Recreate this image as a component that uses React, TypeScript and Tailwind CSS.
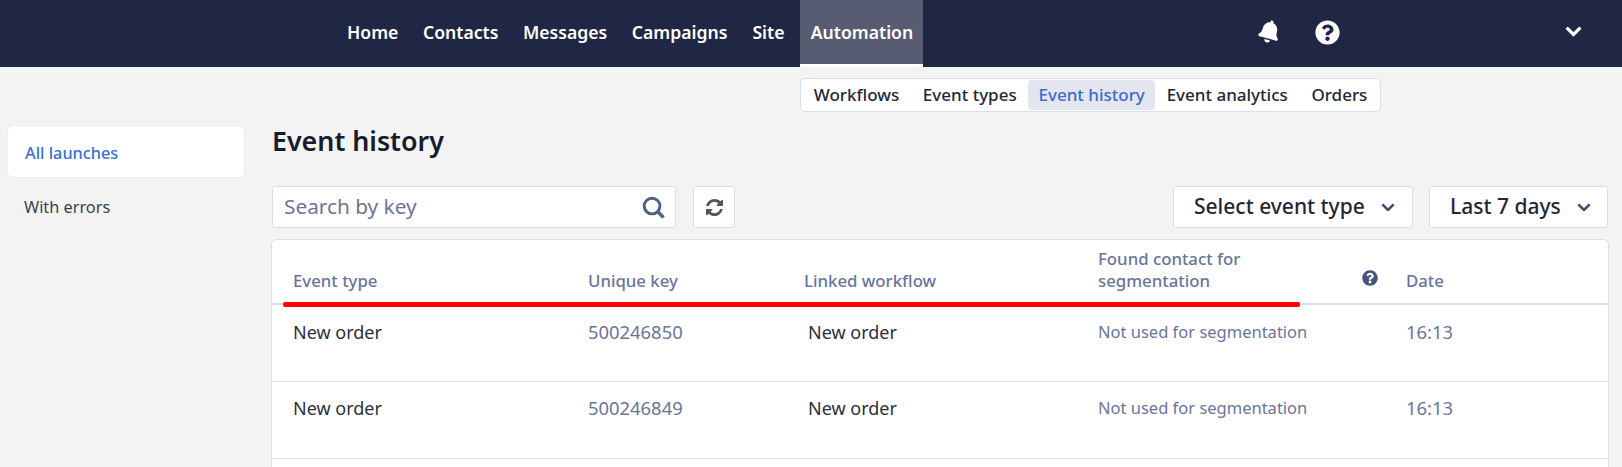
import { FaBell, FaQuestionCircle } from "react-icons/fa";

const topNav = [
  { label: "Home", cls: "ml-[347px]" },
  { label: "Contacts", cls: "ml-[24.6px]" },
  { label: "Messages", cls: "ml-[24.6px]" },
  { label: "Campaigns", cls: "ml-[24.6px]" },
  { label: "Site", cls: "ml-[25px]" },
];

const subNav = ["Workflows", "Event types", "Event history", "Event analytics", "Orders"];

const rows = [
  { key: "500246850", time: "16:13", pad: "pt-[15px]" },
  { key: "500246849", time: "16:13", pad: "pt-[14px]" },
];

const Chevron = ({ className }: { className: string }) => (
  <svg viewBox="0 0 16 10" fill="none" stroke="currentColor" strokeWidth="3" className={className}>
    <path d="M1.5 1.5 8 8l6.5-6.5" />
  </svg>
);

const App = () => {
  return (
    <div className="relative h-screen overflow-hidden bg-[#f3f3f3] font-['Noto_Sans',sans-serif] text-[#1f2739]">
      {/* Top bar */}
      <header className="flex h-[67px] items-center bg-[#1f2744] text-white">
        {topNav.map((item) => (
          <a key={item.label} className={`pb-[2px] text-[17.6px] font-semibold ${item.cls}`}>
            {item.label}
          </a>
        ))}
        <a className="ml-[16px] flex h-[67px] w-[123px] items-center justify-center border-b-[3px] border-white bg-[#585c72] text-[17.6px] font-semibold">
          Automation
        </a>
        <FaBell className="mb-[4px] ml-[335px] rotate-[15deg] text-[23px]" />
        <FaQuestionCircle className="mb-[2px] ml-[34px] text-[25px]" />
        <Chevron className="mb-[4px] ml-[225px] w-[17px]" />
      </header>

      {/* Sub navigation */}
      <div className="ml-[800px] mt-[11px] flex h-[34px] w-[581px] items-center whitespace-nowrap rounded-[5px] border border-[#d9deea] bg-white px-[1px] text-[17px] font-medium">
        {subNav.map((item) =>
          item === "Event history" ? (
            <span key={item} className="flex h-[30px] items-center rounded-[4px] bg-[#e3e6ee] px-[10px] text-[#3b6cc9]">
              {item}
            </span>
          ) : (
            <span key={item} className="px-[11.8px]">
              {item}
            </span>
          ),
        )}
      </div>

      <div className="flex">
        {/* Sidebar */}
        <aside className="ml-[7px] mt-[13px] w-[238px] text-[16.3px]">
          <div className="flex h-[53px] items-center rounded-[6px] border border-[#eeeeee] bg-white pl-[17px] pt-[3px] font-medium text-[#3b6fd4]">
            All launches
          </div>
          <div className="mt-[17px] pl-[17px] text-[#3a3f4d]">With errors</div>
        </aside>

        {/* Main */}
        <main className="ml-[27px] w-[1338px]">
          <h1 className="mt-[11px] text-[26.8px] font-semibold leading-[36px] text-[#171c2c]">Event history</h1>

          <div className="mt-[27px] flex items-center">
            <div className="flex h-[42px] w-[404px] items-center justify-between rounded-[3px] border border-[#d9deea] bg-white pl-[11px] pr-[10px] text-[20.8px] text-[#6b7596]">
              <span>Search by key</span>
              <svg viewBox="0 0 24 24" fill="none" stroke="#4f6185" strokeWidth="3" className="w-[23px]">
                <circle cx="10.5" cy="10.5" r="8.2" />
                <path d="m16.5 16.5 6 6" strokeWidth="3.6" />
              </svg>
            </div>
            <div className="ml-[17px] flex h-[42px] w-[42px] items-center justify-center rounded-[3px] border border-[#d9deea] bg-white">
              <svg viewBox="0 0 1536 1536" fill="#555555" className="w-[17px]">
                <path d="M1511 928q0 5-1 7-64 268-268 434.5t-478 166.5q-146 0-282.5-55t-243.5-157l-129 129q-19 19-45 19t-45-19-19-45v-448q0-26 19-45t45-19h448q26 0 45 19t19 45-19 45l-137 137q71 66 161 102t187 36q134 0 250-65t186-179q11-17 53-117 8-23 30-23h192q13 0 22.5 9.5t9.5 22.5zm25-800v448q0 26-19 45t-45 19h-448q-26 0-45-19t-19-45 19-45l138-138q-148-137-349-137-134 0-250 65t-186 179q-11 17-53 117-8 23-30 23h-199q-13 0-22.5-9.5t-9.5-22.5v-7q65-268 270-434.5t480-166.5q146 0 284 55.5t245 156.5l130-129q19-19 45-19t45 19 19 45z" />
              </svg>
            </div>
            <div className="ml-[438px] flex h-[42px] w-[240px] items-center rounded-[3px] border border-[#d9deea] bg-white pl-[20px] text-[21px] font-medium">
              Select event type
              <Chevron className="ml-[16px] w-[14px] text-[#3f4f78]" />
            </div>
            <div className="ml-[16px] flex h-[42px] w-[179px] items-center rounded-[3px] border border-[#d9deea] bg-white pl-[20px] text-[21px] font-medium">
              Last 7 days
              <Chevron className="ml-[16px] w-[14px] text-[#3f4f78]" />
            </div>
          </div>

          {/* Table */}
          <div className="-ml-[1px] mt-[11px] h-[300px] w-[1338px] rounded-[6px] border border-[#d9deea] bg-white">
            <div className="flex h-[65px] items-end border-b-2 border-[#d9deea] pb-[11px] text-[16.8px] font-medium leading-[22px] text-[#69759a]">
              <span className="ml-[21px] w-[295px]">Event type</span>
              <span className="w-[216px]">Unique key</span>
              <span className="w-[294px]">Linked workflow</span>
              <span className="w-[264px]">
                Found contact for
                <br />
                segmentation
              </span>
              <span className="mb-[6px] w-[44px]">
                <FaQuestionCircle className="text-[16px] text-[#47557e]" />
              </span>
              <span>Date</span>
            </div>
            {rows.map((row) => (
              <div key={row.key} className={`flex h-[77px] border-b border-[#d9deea] text-[18px] leading-[24px] ${row.pad}`}>
                <span className="ml-[21px] w-[295px] text-[#2b3040]">New order</span>
                <span className="w-[220px] text-[18.4px] text-[#69759a]">{row.key}</span>
                <span className="w-[290px] text-[#2b3040]">New order</span>
                <span className="w-[308px] text-[16.5px] text-[#69759a]">Not used for segmentation</span>
                <span className="text-[18.4px] text-[#69759a]">{row.time}</span>
              </div>
            ))}
          </div>
        </main>
      </div>

      {/* Red annotation */}
      <div className="absolute left-[283px] top-[302px] h-[5px] w-[1017px] rounded-[2px] bg-[#ff0000]" />
    </div>
  );
};

export default App;
